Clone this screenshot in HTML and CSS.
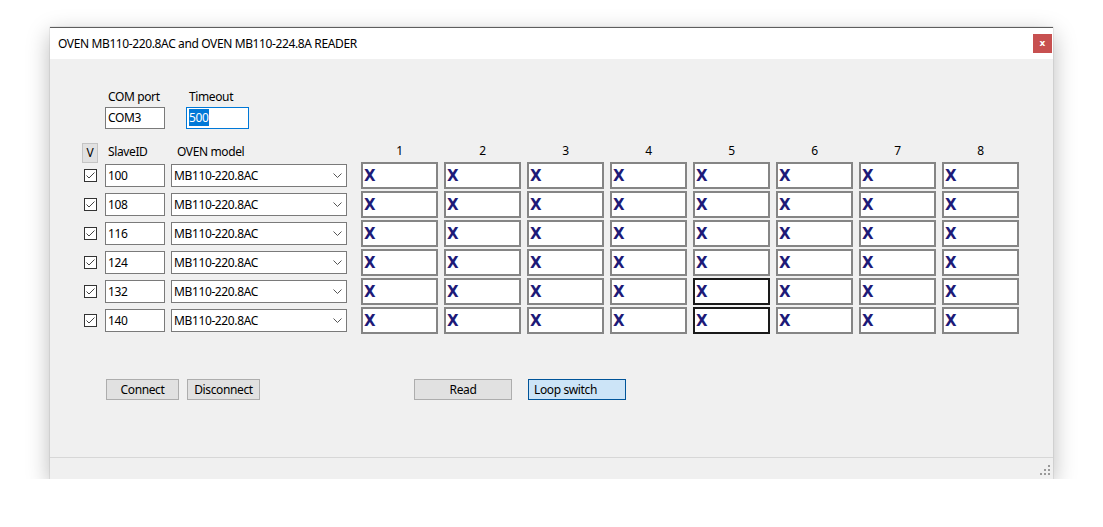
FILE: index.html
```html
<!DOCTYPE html>
<html>
<head>
<meta charset="utf-8">
<link rel="stylesheet" href="styles.css">
</head>
<body>
<div class="window">
  <div class="titlebar">
    <span class="title">OVEN MB110-220.8AC and OVEN MB110-224.8A READER</span>
    <span class="close">x</span>
  </div>
  <div class="client">
    <div class="settings">
      <div class="field">
        <label class="flabel">COM port</label>
        <div class="tbox w60">COM3</div>
      </div>
      <div class="field">
        <label class="flabel">Timeout</label>
        <div class="tbox w63 focus"><span class="sel">500</span></div>
      </div>
    </div>
    <div class="table">
      <div class="hrow">
        <div class="c1"><span class="vbtn">V</span></div>
        <div class="c2 hlab">SlaveID</div>
        <div class="c3 hlab model">OVEN model</div>
        <div class="cells">
          <span class="num">1</span><span class="num">2</span><span class="num">3</span><span class="num">4</span><span class="num">5</span><span class="num">6</span><span class="num">7</span><span class="num">8</span>
        </div>
      </div>
      <div class="row">
        <div class="c1"><span class="cb"><svg width="11" height="11" viewBox="0 0 11 11"><path d="M1.5 5.5 L4 8 L9.5 2.5" fill="none" stroke="#444" stroke-width="1"/></svg></span></div>
        <div class="c2"><div class="tbox w60 h23">100</div></div>
        <div class="c3"><div class="combo">MB110-220.8AC<svg class="chev" width="9" height="5" viewBox="0 0 9 5"><path d="M0.5 0.5 L4.5 4.5 L8.5 0.5" fill="none" stroke="#555" stroke-width="1"/></svg></div></div>
        <div class="cells"><span class="cell">X</span><span class="cell">X</span><span class="cell">X</span><span class="cell">X</span><span class="cell">X</span><span class="cell">X</span><span class="cell">X</span><span class="cell">X</span></div>
      </div>
      <div class="row">
        <div class="c1"><span class="cb"><svg width="11" height="11" viewBox="0 0 11 11"><path d="M1.5 5.5 L4 8 L9.5 2.5" fill="none" stroke="#444" stroke-width="1"/></svg></span></div>
        <div class="c2"><div class="tbox w60 h23">108</div></div>
        <div class="c3"><div class="combo">MB110-220.8AC<svg class="chev" width="9" height="5" viewBox="0 0 9 5"><path d="M0.5 0.5 L4.5 4.5 L8.5 0.5" fill="none" stroke="#555" stroke-width="1"/></svg></div></div>
        <div class="cells"><span class="cell">X</span><span class="cell">X</span><span class="cell">X</span><span class="cell">X</span><span class="cell">X</span><span class="cell">X</span><span class="cell">X</span><span class="cell">X</span></div>
      </div>
      <div class="row">
        <div class="c1"><span class="cb"><svg width="11" height="11" viewBox="0 0 11 11"><path d="M1.5 5.5 L4 8 L9.5 2.5" fill="none" stroke="#444" stroke-width="1"/></svg></span></div>
        <div class="c2"><div class="tbox w60 h23">116</div></div>
        <div class="c3"><div class="combo">MB110-220.8AC<svg class="chev" width="9" height="5" viewBox="0 0 9 5"><path d="M0.5 0.5 L4.5 4.5 L8.5 0.5" fill="none" stroke="#555" stroke-width="1"/></svg></div></div>
        <div class="cells"><span class="cell">X</span><span class="cell">X</span><span class="cell">X</span><span class="cell">X</span><span class="cell">X</span><span class="cell">X</span><span class="cell">X</span><span class="cell">X</span></div>
      </div>
      <div class="row">
        <div class="c1"><span class="cb"><svg width="11" height="11" viewBox="0 0 11 11"><path d="M1.5 5.5 L4 8 L9.5 2.5" fill="none" stroke="#444" stroke-width="1"/></svg></span></div>
        <div class="c2"><div class="tbox w60 h23">124</div></div>
        <div class="c3"><div class="combo">MB110-220.8AC<svg class="chev" width="9" height="5" viewBox="0 0 9 5"><path d="M0.5 0.5 L4.5 4.5 L8.5 0.5" fill="none" stroke="#555" stroke-width="1"/></svg></div></div>
        <div class="cells"><span class="cell">X</span><span class="cell">X</span><span class="cell">X</span><span class="cell">X</span><span class="cell">X</span><span class="cell">X</span><span class="cell">X</span><span class="cell">X</span></div>
      </div>
      <div class="row">
        <div class="c1"><span class="cb"><svg width="11" height="11" viewBox="0 0 11 11"><path d="M1.5 5.5 L4 8 L9.5 2.5" fill="none" stroke="#444" stroke-width="1"/></svg></span></div>
        <div class="c2"><div class="tbox w60 h23">132</div></div>
        <div class="c3"><div class="combo">MB110-220.8AC<svg class="chev" width="9" height="5" viewBox="0 0 9 5"><path d="M0.5 0.5 L4.5 4.5 L8.5 0.5" fill="none" stroke="#555" stroke-width="1"/></svg></div></div>
        <div class="cells"><span class="cell">X</span><span class="cell">X</span><span class="cell">X</span><span class="cell">X</span><span class="cell active">X</span><span class="cell">X</span><span class="cell">X</span><span class="cell">X</span></div>
      </div>
      <div class="row">
        <div class="c1"><span class="cb"><svg width="11" height="11" viewBox="0 0 11 11"><path d="M1.5 5.5 L4 8 L9.5 2.5" fill="none" stroke="#444" stroke-width="1"/></svg></span></div>
        <div class="c2"><div class="tbox w60 h23">140</div></div>
        <div class="c3"><div class="combo">MB110-220.8AC<svg class="chev" width="9" height="5" viewBox="0 0 9 5"><path d="M0.5 0.5 L4.5 4.5 L8.5 0.5" fill="none" stroke="#555" stroke-width="1"/></svg></div></div>
        <div class="cells"><span class="cell">X</span><span class="cell">X</span><span class="cell">X</span><span class="cell">X</span><span class="cell active">X</span><span class="cell">X</span><span class="cell">X</span><span class="cell">X</span></div>
      </div>
    </div>
    <div class="buttons">
      <span class="btn w73">Connect</span>
      <span class="btn w73 ml8">Disconnect</span>
      <span class="btn w98 ml154">Read</span>
      <span class="btn w98 ml16 blue">Loop switch</span>
    </div>
  </div>
  <div class="status">
    <svg class="grip" width="12" height="12" viewBox="0 0 12 12">
      <rect x="9" y="1" width="2" height="2" fill="#999"/>
      <rect x="5" y="5" width="2" height="2" fill="#999"/>
      <rect x="9" y="5" width="2" height="2" fill="#999"/>
      <rect x="1" y="9" width="2" height="2" fill="#999"/>
      <rect x="5" y="9" width="2" height="2" fill="#999"/>
      <rect x="9" y="9" width="2" height="2" fill="#999"/>
    </svg>
  </div>
</div>
</body>
</html>
```

FILE: styles.css
```css
html, body {
  margin: 0;
  padding: 0;
  background: #ffffff;
}
body {
  padding: 27px 0 0 50px;
  font-family: "Noto Sans", "Open Sans", sans-serif;
  font-size: 12px;
  letter-spacing: -0.38px;
  color: #000;
}
.window {
  width: 1003px;
  height: 452px;
  box-sizing: border-box;
  border-top: 1px solid #5e5e5e;
  background: #f0f0f0;
  box-shadow: 0 7px 22px rgba(0,0,0,0.28), 0 0 1px rgba(0,0,0,0.35);
  display: flex;
  flex-direction: column;
}
.titlebar {
  height: 31px;
  background: #ffffff;
  display: flex;
  align-items: center;
  justify-content: space-between;
  padding: 0 1px 0 8px;
}
.title {
  font-size: 12px;
  line-height: 16px;
}
.close {
  width: 19px;
  height: 19px;
  background: #c75050;
  color: #fff;
  font-family: "DejaVu Sans", sans-serif;
  font-weight: bold;
  font-size: 9px;
  letter-spacing: 0;
  line-height: 18px;
  text-align: center;
  margin-top: -1px;
}
.client {
  flex: 1;
  padding: 30px 0 0 0;
}
.settings {
  display: flex;
  padding-left: 55px;
  gap: 21px;
}
.field {
  display: flex;
  flex-direction: column;
}
.flabel {
  line-height: 16px;
  padding-left: 3px;
  margin-bottom: 2px;
}
.tbox {
  box-sizing: border-box;
  height: 22px;
  background: #fff;
  border: 1px solid #7a7a7a;
  padding-left: 2px;
  line-height: 20px;
  white-space: nowrap;
}
.tbox.h23 {
  height: 23px;
  line-height: 21px;
}
.w60 { width: 60px; }
.w63 { width: 63px; }
.tbox.focus {
  border-color: #0078d7;
}
.sel {
  background: #0078d7;
  color: #fff;
  display: inline-block;
  line-height: 17px;
  padding-right: 1px;
}
.table {
  margin-top: 14px;
  padding-left: 32px;
}
.hrow {
  display: flex;
  height: 18px;
  align-items: flex-start;
}
.hrow .c1 {
  height: 18px;
}
.vbtn {
  display: block;
  box-sizing: border-box;
  width: 16px;
  height: 20px;
  background: #e1e1e1;
  border: 1px solid #c4c4c4;
  text-align: center;
  line-height: 18px;
  position: relative;
  z-index: 1;
}
.hlab {
  line-height: 18px;
  padding-left: 3px;
  box-sizing: border-box;
}
.hlab.model {
  padding-left: 6px;
}
.c1 { width: 23px; flex: none; }
.c2 { width: 66px; flex: none; }
.c3 { width: 190px; flex: none; }
.cells {
  display: flex;
  gap: 6px;
}
.num {
  width: 77px;
  text-align: center;
  line-height: 16px;
}
.row {
  display: flex;
  height: 29px;
  align-items: center;
}
.cb {
  display: block;
  box-sizing: border-box;
  width: 13px;
  height: 13px;
  border: 1px solid #333;
  background: #fff;
  margin-left: 2px;
}
.cb svg { display: block; }
.combo {
  box-sizing: border-box;
  width: 176px;
  height: 23px;
  background: #fff;
  border: 1px solid #7a7a7a;
  padding-left: 2px;
  line-height: 21px;
  display: flex;
  justify-content: space-between;
  align-items: center;
}
.chev {
  margin-right: 4px;
}
.cell {
  box-sizing: border-box;
  width: 77px;
  height: 27px;
  background: #fff;
  border: 2px solid #858585;
  padding-left: 1px;
  font-family: "DejaVu Sans", sans-serif;
  font-weight: bold;
  font-size: 15px;
  letter-spacing: 0;
  line-height: 24px;
  color: #1d1a78;
}
.cell.active {
  border-color: #1a1a1a;
}
.buttons {
  margin-top: 44px;
  padding-left: 56px;
  display: flex;
}
.btn {
  box-sizing: border-box;
  height: 21px;
  background: #e1e1e1;
  border: 1px solid #adadad;
  text-align: center;
  line-height: 19px;
}
.w73 { width: 73px; }
.w98 { width: 98px; }
.ml8 { margin-left: 8px; }
.ml16 { margin-left: 16px; }
.ml154 { margin-left: 154px; }
.btn.blue {
  background: #cce4f7;
  border-color: #005499;
  text-align: left;
  padding-left: 5px;
}
.status {
  height: 22px;
  box-sizing: border-box;
  border-top: 1px solid #d7d7d7;
  display: flex;
  justify-content: flex-end;
  align-items: flex-end;
  padding: 0 2px 3px 0;
}
.grip { display: block; }
```
